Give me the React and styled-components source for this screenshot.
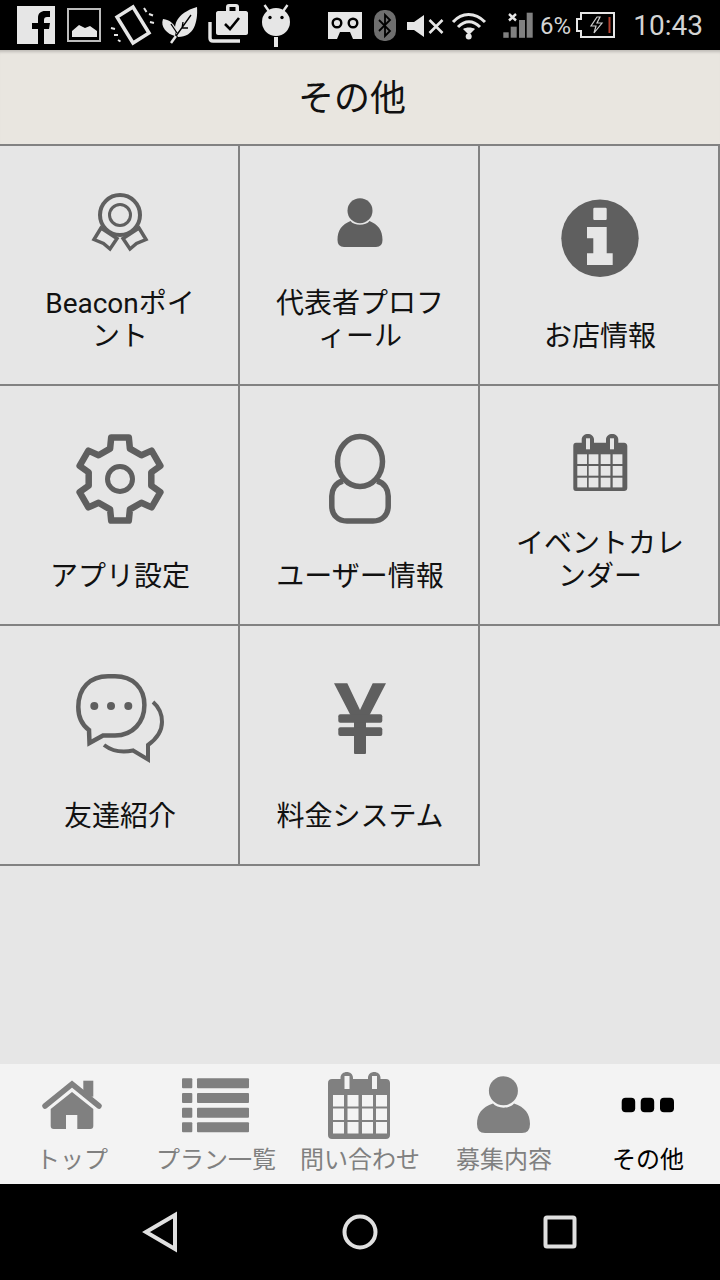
import React from "react";
import styled, { createGlobalStyle } from "styled-components";

const GlobalStyle = createGlobalStyle`
  html, body {
    margin: 0;
    padding: 0;
    background: #e6e6e6;
  }
  * {
    box-sizing: border-box;
  }
`;

const FONT = `Roboto, "Noto Sans CJK JP", sans-serif`;
const ICON = "#5f5f5f";
const TAB = "#808080";

const Screen = styled.div`
  width: 720px;
  height: 1280px;
  display: flex;
  flex-direction: column;
  overflow: hidden;
  background: #e6e6e6;
  font-family: ${FONT};
`;

const StatusBar = styled.div`
  height: 50px;
  flex: none;
  background: #000;
  display: flex;
  align-items: center;
`;

const StatusText = styled.span`
  width: ${(p) => p.$width}px;
  font-size: ${(p) => p.$size}px;
  color: #d4d4d4;
  text-align: ${(p) => p.$align || "left"};
  line-height: 50px;
  margin-top: 1px;
`;

const Header = styled.header`
  height: 96px;
  flex: none;
  background: #e9e6e0;
  border-bottom: 2px solid #828282;
  box-shadow: inset 0 4px 3px -2px rgba(0, 0, 0, 0.18);
  display: flex;
  align-items: center;
  justify-content: center;
  padding: 0 16px 4px 0;
`;

const Title = styled.h1`
  margin: 0;
  font-size: 36px;
  font-weight: 400;
  color: #111;
`;

const Grid = styled.main`
  flex: 1;
  display: grid;
  grid-template-columns: repeat(3, 240px);
  grid-auto-rows: 240px;
`;

const Cell = styled.div`
  border-right: 2px solid #828282;
  border-bottom: 2px solid #828282;
  display: flex;
  flex-direction: column;
  align-items: center;
  padding: 44px 0 31px 2px;
`;

const CellIcon = styled.svg`
  width: 100px;
  height: 97px;
  flex: none;
  display: block;
  fill: ${ICON};
`;

const CellLabel = styled.div`
  margin-top: auto;
  width: 172px;
  font-size: 28px;
  line-height: 33px;
  text-align: center;
  color: #111;
  line-break: anywhere;
  word-break: break-all;
`;

const TabBar = styled.nav`
  height: 120px;
  flex: none;
  background: #f3f3f3;
  display: grid;
  grid-template-columns: repeat(5, 144px);
`;

const Tab = styled.div`
  display: flex;
  flex-direction: column;
  align-items: center;
  padding-top: 6px;
  color: ${(p) => (p.$active ? "#000" : TAB)};
`;

const TabIcon = styled.svg`
  width: 100px;
  height: 70px;
  flex: none;
  display: block;
  fill: currentColor;
`;

const TabLabel = styled.span`
  font-size: 24px;
  line-height: 30px;
  margin-top: 5px;
  white-space: nowrap;
`;

const NavBar = styled.div`
  height: 96px;
  flex: none;
  background: #000;
  display: grid;
  grid-template-columns: 320px 80px 320px;
  align-items: center;
`;

const NavIcon = styled.svg`
  width: 100%;
  height: 96px;
  display: block;
  fill: none;
  stroke: #e0e0e0;
  stroke-width: 4;
`;

// each one is a slice of the status bar, so the x values are screen pixels
const Slice = ({ x, w, children }) => (
  <svg
    width={w}
    height="50"
    viewBox={`${x} 0 ${w} 50`}
    style={{ display: "block", flex: "none" }}
  >
    {children}
  </svg>
);

const LIGHT = "#e6e6e6";

const StatusIcons = () => (
  <>
    <Slice x={0} w={60}>
      <rect x="17" y="6" width="38" height="38" fill={LIGHT} />
      <path
        d="M38 44V29h-6v-6h6v-5c0-5 3-7 7-7h5v6h-3c-2 0-3 1-3 3v3h6l-1 6h-5v15z"
        fill="#000"
      />
    </Slice>
    <Slice x={60} w={45}>
      <rect x="68" y="9" width="32" height="32" fill="none" stroke="#bdbdbd" strokeWidth="2" />
      <path d="M72 37V31l7-6 6 3 5-2 7 5v6z" fill={LIGHT} />
    </Slice>
    <Slice x={105} w={55}>
      <path
        d="M133 7l16 26-16 10-16-26z"
        fill="none"
        stroke={LIGHT}
        strokeWidth="3.5"
      />
      <path
        d="M144 8l2.500 4M149 14l4 1.500M150 22l4 1M111 28l4 1M114 35l4 0M118 40l2.500 1.500"
        stroke={LIGHT}
        strokeWidth="2"
      />
    </Slice>
    <Slice x={160} w={45}>
      <path d="M178 37c-7-10-2-24 19-30 1 15-3 30-19 30z" fill={LIGHT} />
      <path d="M163 19c7 1 12 5 13 11l-1 6c-8-2-15-9-12-17z" fill={LIGHT} />
      <path d="M171 43l5-7" stroke={LIGHT} strokeWidth="2.5" />
      <path d="M176 36l15-21M182 28l1-6M182 28l6 0M177 33l-6-9" stroke="#000" strokeWidth="1.3" fill="none" />
    </Slice>
    <Slice x={205} w={50}>
      <path d="M226 11V7c0-2 1-3 3-3h7c2 0 3 1 3 3v4h7c1 0 2 1 2 2v20c0 1-1 2-2 2h-28c-1 0-2-1-2-2V13c0-1 1-2 2-2z" fill={LIGHT} />
      <rect x="229.500" y="7" width="6" height="4" fill="#000" />
      <path d="M225 24l5 5 9-11" fill="none" stroke="#000" strokeWidth="2.6" />
      <path d="M210 22v16c0 2 1 3 3 3h27" fill="none" stroke={LIGHT} strokeWidth="3.4" />
    </Slice>
    <Slice x={255} w={55}>
      <circle cx="276" cy="22" r="14" fill={LIGHT} />
      <path d="M264.500 5l5 7M287.500 5l-5 7" stroke={LIGHT} strokeWidth="2.4" />
      <circle cx="270" cy="17.500" r="1.700" fill="#000" />
      <circle cx="282" cy="17.500" r="1.700" fill="#000" />
      <rect x="274" y="37" width="4" height="10" fill={LIGHT} />
    </Slice>
    <Slice x={310} w={60}>
      <path d="M328 12h34v27h-9l-3-7h-10l-3 7h-9z" fill={LIGHT} />
      <circle cx="337" cy="23" r="4.300" fill={LIGHT} stroke="#000" strokeWidth="2.400" />
      <circle cx="353" cy="23" r="4.300" fill={LIGHT} stroke="#000" strokeWidth="2.400" />
    </Slice>
    <Slice x={370} w={30}>
      <rect x="374" y="10" width="22" height="31" rx="10" fill="#6e6e6e" />
      <path d="M379 20l11 11-5 5V15l5 5-11 11" fill="none" stroke="#000" strokeWidth="1.800" />
    </Slice>
    <Slice x={400} w={45}>
      <path d="M407 22h7l10-7v22l-10-7h-7z" fill={LIGHT} />
      <path d="M429.500 20l13 13M442.500 20l-13 13" stroke={LIGHT} strokeWidth="2.600" />
    </Slice>
    <Slice x={445} w={50}>
      <path d="M453 22c9-10 22-10 32 0" fill="none" stroke={LIGHT} strokeWidth="3" />
      <path d="M458 27c7-7 15-7 22 0" fill="none" stroke={LIGHT} strokeWidth="3" />
      <path d="M463 29c3-2 9-2 12 0l-6 6z" fill={LIGHT} />
      <circle cx="468.700" cy="36.500" r="3" fill={LIGHT} />
    </Slice>
    <Slice x={495} w={45}>
      <rect x="503.300" y="32.300" width="5.400" height="5.500" fill={TAB} />
      <rect x="510.700" y="26.700" width="6" height="11" fill={TAB} />
      <rect x="519" y="20" width="6" height="17.800" fill={TAB} />
      <rect x="526.700" y="12.700" width="6" height="25" fill={TAB} />
      <path d="M509 14l7 6.500M516 14l-7 6.500" stroke={LIGHT} strokeWidth="2.400" />
    </Slice>
    <StatusText $width={36} $size={24}>
      6%
    </StatusText>
    <Slice x={576} w={44}>
      <path
        d="M581 13h33v24h-33v-6h-4V19h4z"
        fill="none"
        stroke={LIGHT}
        strokeWidth="2"
      />
      <path d="M597 17l-6 9h5l-2 7 8-10h-5l3-6z" fill="none" stroke="#cfcfcf" strokeWidth="1.200" />
      <rect x="608.500" y="17" width="2" height="16" fill="#b5402f" />
    </Slice>
    <StatusText $width={83} $size={28} $align="right">
      10:43
    </StatusText>
  </>
);

const gearPath = () => {
  const pts = [];
  const at = (deg, r) => {
    const a = (deg * Math.PI) / 180;
    return `${(50 + r * Math.cos(a)).toFixed(1)} ${(49 + r * Math.sin(a)).toFixed(1)}`;
  };
  [-90, -30, 30, 90, 150, 210].forEach((t) => {
    pts.push(at(t - 18, 32), at(t - 12, 42.5), at(t + 12, 42.5), at(t + 18, 32));
  });
  return `M${pts.join("L")}Z`;
};

const calendarCells = (xs, ys, w, h, fill) =>
  ys.flatMap((y) =>
    xs.map((x) => (
      <rect key={`${x}-${y}`} x={x} y={y} width={w} height={h} fill={fill} />
    ))
  );

const AwardIcon = () => (
  <CellIcon viewBox="0 0 100 97">
    <g fill="none" stroke={ICON} strokeWidth="3.500">
      <path d="M24 49.500L31 38l16 10.500-7 10.500-6.500-5.500z" />
      <path d="M76 49.500L69 38 53 48.500l7 10.500 6.500-5.500z" />
      <circle cx="50" cy="25" r="20" fill="#e6e6e6" strokeWidth="4" />
      <circle cx="50" cy="25" r="10.500" strokeWidth="3" />
    </g>
  </CellIcon>
);

const PersonIcon = () => (
  <CellIcon viewBox="0 0 100 97">
    <circle cx="50" cy="20.700" r="12.500" />
    <path d="M27.500 50C27.500 40 32 34.500 40.500 31C44 36 56 36 59.500 31C68 34.500 72.500 40 72.500 50Q72.500 57 66 57H34Q27.500 57 27.500 50Z" />
  </CellIcon>
);

const InfoIcon = () => (
  <CellIcon viewBox="0 0 100 97">
    <circle cx="50" cy="48.300" r="38.700" />
    <path
      d="M44.500 17.700H55.500Q56.700 17.700 56.700 19V29Q56.700 30 55.500 30H44.500Q43.300 30 43.300 29V19Q43.300 17.700 44.500 17.700ZM37 37H56.700V63.300H62.700V75H37V63.300H43.300V48.300H37Z"
      fill="#e6e6e6"
    />
  </CellIcon>
);

const GearIcon = () => (
  <CellIcon viewBox="0 0 100 97">
    <path d={gearPath()} fill="none" stroke={ICON} strokeWidth="6.500" strokeLinejoin="round" />
    <circle cx="50" cy="49" r="12.500" fill="none" stroke={ICON} strokeWidth="5" />
  </CellIcon>
);

const UserOutlineIcon = () => (
  <CellIcon viewBox="0 0 100 97">
    <g fill="none" stroke={ICON} strokeWidth="5.500">
      <ellipse cx="50" cy="31.500" rx="22.500" ry="25" />
      <path d="M33 51C25 53 21.800 60 21.800 66V76C21.800 85 28 91 37 91H63C72 91 78.200 85 78.200 76V66C78.200 60 75 53 67 51" />
    </g>
  </CellIcon>
);

const CalendarIcon = () => (
  <CellIcon viewBox="0 0 100 97">
    <path d="M26 12.700H31.700V9.500C31.700 2 44 2 44 9.500V12.700H56V9.500C56 2 68.300 2 68.300 9.500V12.700H74C76 12.700 77.300 14 77.300 16V58C77.300 60 76 61 74 61H26C24 61 23.300 60 23.300 58V16C23.300 14 24 12.700 26 12.700Z" />
    <rect x="36" y="8.300" width="4" height="11" fill="#e6e6e6" />
    <rect x="60" y="8.300" width="4" height="11" fill="#e6e6e6" />
    {calendarCells([27.300, 38.700, 50.700, 62.700], [24.300, 36, 47.700], 9.700, 9.700, "#e6e6e6")}
  </CellIcon>
);

const ChatIcon = () => (
  <CellIcon viewBox="0 0 100 97">
    <path
      d="M19 60C12 55 8.300 48 8.300 37C8.300 18 20 6.300 38 6.300H45C63 6.300 74.400 18 74.400 35C74.400 52 63 65.500 45 65.500H33L19.500 73Z"
      fill="none"
      stroke={ICON}
      strokeWidth="4.500"
    />
    <circle cx="24.300" cy="36" r="4" />
    <circle cx="41" cy="36" r="4" />
    <circle cx="58.300" cy="36" r="4" />
    <path
      d="M83 32C90 38 92 46 92 52C92 62 85 70 78 75V89.500L63 80.500C52 83 42 81 34 75"
      fill="none"
      stroke={ICON}
      strokeWidth="4"
    />
  </CellIcon>
);

const YenIcon = () => (
  <CellIcon viewBox="0 0 100 97">
    <path d="M24 13.300H37.300L50 40L62.700 13.300H76L56 52V83Q56 84 55 84H45Q44 84 44 83V52Z" />
    <rect x="28.300" y="44.300" width="44" height="8.400" rx="2" />
    <rect x="28.300" y="57.300" width="44" height="8.700" rx="2" />
  </CellIcon>
);

const cells = [
  { label: "Beaconポイント", Icon: AwardIcon },
  { label: "代表者プロフィール", Icon: PersonIcon },
  { label: "お店情報", Icon: InfoIcon },
  { label: "アプリ設定", Icon: GearIcon },
  { label: "ユーザー情報", Icon: UserOutlineIcon },
  { label: "イベントカレンダー", Icon: CalendarIcon },
  { label: "友達紹介", Icon: ChatIcon },
  { label: "料金システム", Icon: YenIcon },
];

const HomeTabIcon = () => (
  <TabIcon viewBox="0 0 100 70">
    <rect x="61.300" y="10.700" width="10" height="16" />
    <path d="M23 36L50 14L77 36" fill="none" stroke="currentColor" strokeWidth="5.500" strokeLinecap="round" />
    <path d="M50 22L71.300 39V56Q71.300 59 68.300 59H55.300V45H44V59H31.700Q28.700 59 28.700 56V39Z" />
  </TabIcon>
);

const ListTabIcon = () => (
  <TabIcon viewBox="0 0 100 70">
    {[8.300, 23, 37.700, 52.300].map((y) => (
      <React.Fragment key={y}>
        <rect x="16" y={y} width="10.300" height="10" rx="1" />
        <rect x="31" y={y} width="52" height="10" rx="1" />
      </React.Fragment>
    ))}
  </TabIcon>
);

const CalendarTabIcon = () => (
  <TabIcon viewBox="0 0 100 70">
    <path d="M22 9H30.500V8C30.500 -0 43 -0 43 8V9H58V8C58 -0 70.500 -0 70.500 8V9H76C78.500 9 80 10.500 80 13V65C80 67.500 78.500 69 76 69H22C19.500 69 18 67.500 18 65V13C18 10.500 19.500 9 22 9Z" />
    <rect x="34.500" y="6" width="5" height="13" fill="#f3f3f3" />
    <rect x="62" y="6" width="5" height="13" fill="#f3f3f3" />
    {calendarCells([23, 37.500, 52, 66], [25, 38.500, 52], 11, 11.500, "#f3f3f3")}
  </TabIcon>
);

const PersonTabIcon = () => (
  <TabIcon viewBox="0 0 100 70">
    <circle cx="49.400" cy="20.700" r="14.500" />
    <path d="M23 54C23 44 28 37 39 33.500C43 39 56 39 60 33.500C71 37 76 44 76 54Q76 63 68 63H31Q23 63 23 54Z" />
  </TabIcon>
);

const MoreTabIcon = () => (
  <TabIcon viewBox="0 0 100 70">
    <rect x="23.700" y="27.700" width="13.500" height="14.600" rx="4" />
    <rect x="42.700" y="27.700" width="13.500" height="14.600" rx="4" />
    <rect x="62" y="27.700" width="14" height="14.600" rx="4" />
  </TabIcon>
);

const tabs = [
  { label: "トップ", Icon: HomeTabIcon },
  { label: "プラン一覧", Icon: ListTabIcon },
  { label: "問い合わせ", Icon: CalendarTabIcon },
  { label: "募集内容", Icon: PersonTabIcon },
  { label: "その他", Icon: MoreTabIcon, active: true },
];

const App = () => (
  <>
    <GlobalStyle />
    <Screen>
      <StatusBar>
        <StatusIcons />
      </StatusBar>
      <Header>
        <Title>その他</Title>
      </Header>
      <Grid>
        {cells.map(({ label, Icon }) => (
          <Cell key={label}>
            <Icon />
            <CellLabel>{label}</CellLabel>
          </Cell>
        ))}
      </Grid>
      <TabBar>
        {tabs.map(({ label, Icon, active }) => (
          <Tab key={label} $active={active}>
            <Icon />
            <TabLabel>{label}</TabLabel>
          </Tab>
        ))}
      </TabBar>
      <NavBar>
        <NavIcon viewBox="0 0 320 96">
          <path d="M146 48L175 31V65Z" />
        </NavIcon>
        <NavIcon viewBox="320 0 80 96">
          <circle cx="360" cy="48" r="15.500" />
        </NavIcon>
        <NavIcon viewBox="400 0 320 96">
          <rect x="545.500" y="33.500" width="29" height="29" rx="1.500" />
        </NavIcon>
      </NavBar>
    </Screen>
  </>
);

export default App;
